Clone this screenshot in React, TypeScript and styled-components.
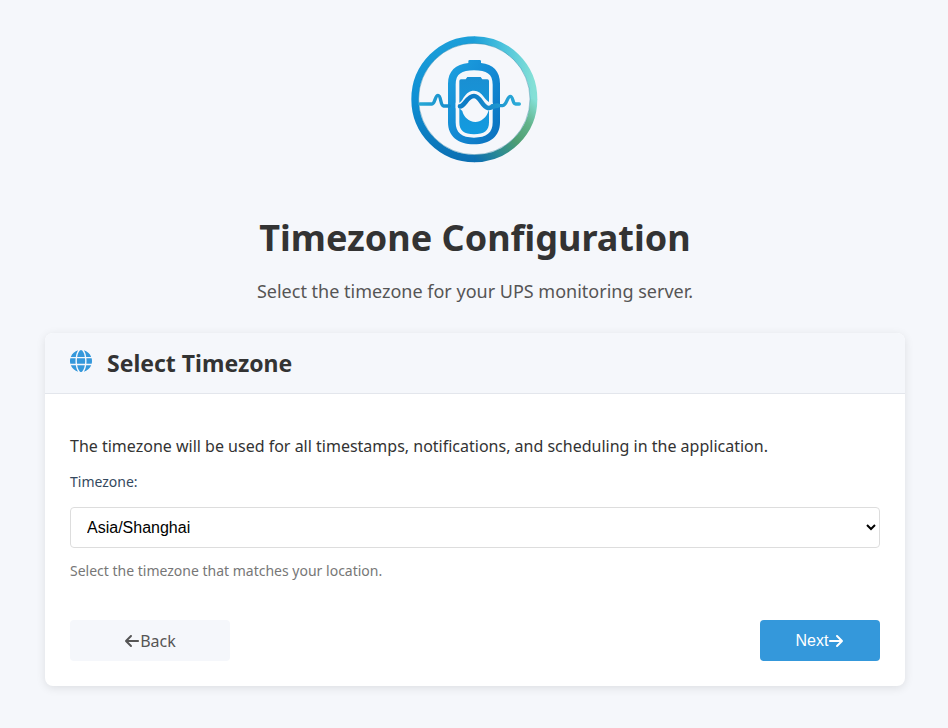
import { useState } from "react";
import styled, { createGlobalStyle } from "styled-components";
import { FaArrowLeft, FaArrowRight } from "react-icons/fa6";

const colors = {
  page: "#f5f7fb",
  card: "#ffffff",
  border: "#e3e6ec",
  inputBorder: "#dddddd",
  primary: "#3498db",
  heading: "#333333",
  text: "#333333",
  label: "#34495e",
  muted: "#555555",
  hint: "#777777",
};

const fonts = {
  body: `"Noto Sans", "Open Sans", sans-serif`,
  control: `"Liberation Sans", Arial, sans-serif`,
};

const timezones = [
  "UTC",
  "America/New_York",
  "Asia/Shanghai",
  "Asia/Tokyo",
  "Europe/London",
  "Europe/Rome",
];

const GlobalStyle = createGlobalStyle`
  * {
    box-sizing: border-box;
  }

  body {
    margin: 0;
    background: ${colors.page};
    color: ${colors.text};
    font-family: ${fonts.body};
  }
`;

const Page = styled.main`
  max-width: 960px;
  margin: 0 auto;
  padding: 25px 43px 40px 45px;
`;

const Intro = styled.header`
  display: flex;
  flex-direction: column;
  align-items: center;
  margin-bottom: 28px;
  text-align: center;
`;

const LogoImage = styled.svg`
  display: block;
  width: 150px;
  height: 150px;
  margin-bottom: 39px;
`;

const Title = styled.h1`
  margin: 0 0 15px;
  color: ${colors.heading};
  font-size: 36px;
  font-weight: 700;
  line-height: 48px;
`;

const Subtitle = styled.p`
  margin: 0;
  color: ${colors.muted};
  font-size: 18px;
  line-height: 28px;
`;

const Card = styled.section`
  overflow: hidden;
  background: ${colors.card};
  border-radius: 8px;
  box-shadow: 0 2px 10px rgba(0, 0, 0, 0.1);
`;

const CardHeader = styled.div`
  display: flex;
  align-items: center;
  gap: 15px;
  padding: 14px 25px;
  background: ${colors.page};
  border-bottom: 1px solid ${colors.border};
`;

const GlobeIcon = styled.svg`
  width: 22px;
  height: 22px;
  margin-bottom: 4px;
  fill: ${colors.primary};
`;

const CardTitle = styled.h2`
  margin: 0;
  color: ${colors.heading};
  font-size: 23px;
  font-weight: 700;
  line-height: 32px;
`;

const CardBody = styled.form`
  padding: 40px 25px 25px;
`;

const Description = styled.p`
  margin: 0 0 12px;
  font-size: 16px;
  line-height: 24px;
`;

const Label = styled.label`
  display: block;
  margin-bottom: 13px;
  color: ${colors.label};
  font-size: 14px;
  line-height: 24px;
`;

const Select = styled.select`
  display: block;
  width: 100%;
  height: 41px;
  padding: 0 12px;
  color: #000000;
  background: ${colors.card};
  border: 1px solid ${colors.inputBorder};
  border-radius: 4px;
  font-family: ${fonts.control};
  font-size: 16px;
`;

const Hint = styled.p`
  margin: 11px 0 37px;
  color: ${colors.hint};
  font-size: 14px;
  line-height: 24px;
`;

const Actions = styled.div`
  display: flex;
  justify-content: space-between;
`;

const BackLink = styled.a`
  display: flex;
  align-items: center;
  justify-content: center;
  width: 160px;
  height: 41px;
  color: ${colors.muted};
  background: ${colors.page};
  border-radius: 4px;
  font-size: 16px;
  text-decoration: none;
`;

const NextButton = styled.button`
  display: flex;
  align-items: center;
  justify-content: center;
  width: 120px;
  height: 41px;
  padding: 0;
  color: #ffffff;
  background: ${colors.primary};
  border: none;
  border-radius: 4px;
  font-family: ${fonts.control};
  font-size: 16px;
  cursor: pointer;
`;

function Logo() {
  return (
    <LogoImage viewBox="0 0 450 450" role="img" aria-label="UPS monitor">
      <defs>
        <linearGradient id="ring-left" x1="0" y1="34" x2="0" y2="411" gradientUnits="userSpaceOnUse">
          <stop offset="0" stopColor="#1c9fd9" />
          <stop offset="0.5" stopColor="#0f8fd4" />
          <stop offset="1" stopColor="#0b6fb2" />
        </linearGradient>
        <linearGradient id="ring-top" x1="222" y1="0" x2="400" y2="0" gradientUnits="userSpaceOnUse">
          <stop offset="0" stopColor="#1c9fd9" />
          <stop offset="0.5" stopColor="#4cc3dc" />
          <stop offset="1" stopColor="#84e0d6" />
        </linearGradient>
        <linearGradient id="ring-bottom" x1="222" y1="400" x2="402" y2="222" gradientUnits="userSpaceOnUse">
          <stop offset="0" stopColor="#0b6fb2" />
          <stop offset="0.25" stopColor="#2b8a93" />
          <stop offset="0.5" stopColor="#4e9e72" />
          <stop offset="0.75" stopColor="#62b38b" />
          <stop offset="1" stopColor="#84e0d6" />
        </linearGradient>
        <linearGradient id="battery" x1="0" y1="0" x2="1" y2="1">
          <stop offset="0" stopColor="#1ea2e0" />
          <stop offset="0.5" stopColor="#138ad4" />
          <stop offset="1" stopColor="#0a6fbc" />
        </linearGradient>
        <linearGradient id="cell" x1="0" y1="0" x2="0" y2="1">
          <stop offset="0" stopColor="#1a8fd2" />
          <stop offset="1" stopColor="#139be0" />
        </linearGradient>
        <linearGradient id="pulse" x1="57" y1="0" x2="362" y2="0" gradientUnits="userSpaceOnUse">
          <stop offset="0" stopColor="#27a9d6" />
          <stop offset="0.5" stopColor="#0b78c4" />
          <stop offset="1" stopColor="#2eaed9" />
        </linearGradient>
      </defs>

      <g fill="none" strokeWidth="22">
        <path d="M223 400.500A178 178 0 0 1 223 44.500" stroke="url(#ring-left)" />
        <path d="M222 44.500A178 178 0 0 1 401 222.500" stroke="url(#ring-top)" />
        <path d="M401 222A178 178 0 0 1 222 400.500" stroke="url(#ring-bottom)" />
      </g>
      <circle cx="223" cy="222" r="167" fill="none" stroke="#247b9d" strokeWidth="2" opacity="0.6" />

      <path
        fill="url(#battery)"
        fillRule="evenodd"
        d="M205 114V109Q205 105 209 105H239Q243 105 243 109V114C279 117 300 139 300 176V292C300 334 271 358 222 358C173 358 144 334 144 292V176C144 139 167 117 205 114ZM222 136C185 136 167 147 167 179V292C167 323 185 338 222 338C260 338 278 323 278 292V179C278 147 260 136 222 136Z"
      />
      <path
        fill="url(#cell)"
        d="M178 168Q178 163 183 163H197L202 156H242L247 163H262Q267 163 267 168V292C267 318 252 328 222 328C193 328 178 318 178 292Z"
      />
      <path
        fill={colors.page}
        d="M167 233H178C190 229 194 197 222 197C248 197 255 231 273 233H278V256H266C261 278 242 291 226 291C207 291 190 275 187 258L178 250H167Z"
      />
      <g fill="none" stroke="url(#pulse)" strokeLinecap="round" strokeLinejoin="round">
        <path d="M60 237H96C105 237 105 211 114 211C124 211 120 241 131 243H148" strokeWidth="10" />
        <path d="M180 244C194 244 201 213 222 213C241 213 246 246 264 249C274 250 278 243 292 242" strokeWidth="14" />
        <path d="M276 242H308C321 241 321 214 331 214C340 214 337 237 347 237H358" strokeWidth="10" />
      </g>
    </LogoImage>
  );
}

function Globe() {
  return (
    <GlobeIcon viewBox="0 0 512 512" aria-hidden="true">
      <path d="M352 256c0 22.200-1.200 43.600-3.300 64H163.300c-2.200-20.400-3.300-41.800-3.300-64s1.200-43.600 3.300-64h185.400c2.200 20.400 3.300 41.800 3.300 64zm28.800-64h123.100c5.300 20.500 8.100 41.900 8.100 64s-2.800 43.500-8.100 64H380.800c2.100-20.600 3.200-42 3.200-64s-1.100-43.400-3.200-64zm112.600-32H376.700c-10-63.900-29.800-117.400-55.300-151.600 78.300 20.700 142 77.500 171.900 151.600zm-149.100 0H167.700c6.100-36.400 15.500-68.600 27-94.700 10.500-23.600 22.200-40.700 33.500-51.500C239.400 3.200 248.700 0 256 0s16.600 3.200 27.800 13.800c11.300 10.800 23 27.900 33.500 51.500 11.600 26 20.900 58.200 27 94.700zm-209 0H18.600C48.600 85.900 112.200 29.100 190.600 8.400 165.100 42.600 145.300 96.100 135.300 160zM8.100 192h123.100c-2.100 20.600-3.200 42-3.200 64s1.100 43.400 3.200 64H8.100C2.800 299.500 0 278.100 0 256s2.800-43.500 8.100-64zm186.600 254.600c-11.600-26-20.900-58.200-27-94.600h176.600c-6.100 36.400-15.500 68.600-27 94.600-10.500 23.600-22.200 40.700-33.500 51.500-11.200 10.700-20.500 13.900-27.800 13.900s-16.600-3.200-27.800-13.800c-11.300-10.800-23-27.900-33.500-51.500zM135.300 352c10 63.900 29.800 117.400 55.300 151.600C112.200 482.900 48.600 426.100 18.600 352h116.700zm358.100 0c-30 74.100-93.600 130.900-171.900 151.600 25.500-34.200 45.200-87.700 55.300-151.600h116.600z" />
    </GlobeIcon>
  );
}

export default function App() {
  const [timezone, setTimezone] = useState("Asia/Shanghai");

  return (
    <>
      <GlobalStyle />
      <Page>
        <Intro>
          <Logo />
          <Title>Timezone Configuration</Title>
          <Subtitle>Select the timezone for your UPS monitoring server.</Subtitle>
        </Intro>

        <Card>
          <CardHeader>
            <Globe />
            <CardTitle>Select Timezone</CardTitle>
          </CardHeader>
          <CardBody onSubmit={(event) => event.preventDefault()}>
            <Description>
              The timezone will be used for all timestamps, notifications, and scheduling in the
              application.
            </Description>
            <Label htmlFor="timezone">Timezone:</Label>
            <Select
              id="timezone"
              value={timezone}
              onChange={(event) => setTimezone(event.target.value)}
            >
              {timezones.map((zone) => (
                <option key={zone} value={zone}>
                  {zone}
                </option>
              ))}
            </Select>
            <Hint>Select the timezone that matches your location.</Hint>
            <Actions>
              <BackLink href="#back">
                <FaArrowLeft aria-hidden="true" />
                Back
              </BackLink>
              <NextButton type="submit">
                Next
                <FaArrowRight aria-hidden="true" />
              </NextButton>
            </Actions>
          </CardBody>
        </Card>
      </Page>
    </>
  );
}
